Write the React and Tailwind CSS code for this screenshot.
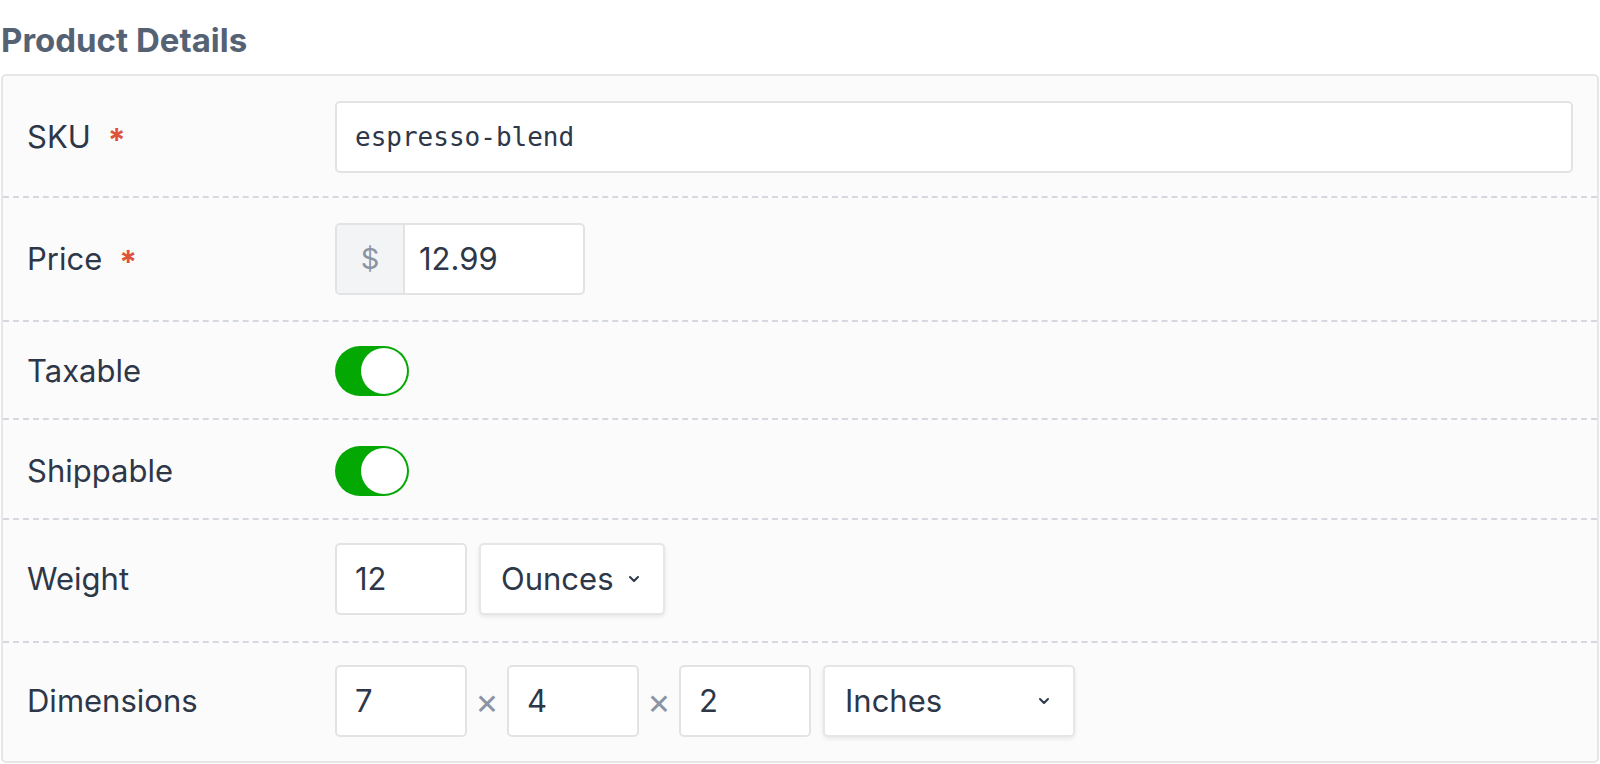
import React from 'react';

const font = { fontFamily: 'Inter, "Noto Sans", sans-serif' };

const Label = ({ children, required }) => (
  <div className="w-[308px] shrink-0 flex items-center text-[31px] text-[#2d3748]">
    <span>{children}</span>
    {required && <span className="ml-[17px] text-[32px] font-bold text-[#e0533a] leading-none pt-[8px]">*</span>}
  </div>
);

const Box = ({ className = '', children }) => (
  <div className={`h-[72px] bg-white border-2 border-[#e3e3e3] rounded-[5px] flex items-center text-[31px] text-[#2d3748] ${className}`}>
    {children}
  </div>
);

const Chevron = () => (
  <svg width="14" height="10" viewBox="0 0 14 10" fill="none" stroke="#2d3748" strokeWidth="2" strokeLinecap="round" strokeLinejoin="round">
    <polyline points="3,3 7,7 11,3" />
  </svg>
);

const Select = ({ value, width }) => (
  <div className={`h-[72px] ${width} bg-white border-2 border-[#e6e6e6] rounded-[5px] shadow-[0_2px_4px_rgba(0,0,0,0.08)] flex items-center justify-between pl-[20px] pr-[22px] text-[31px] text-[#2d3748]`}>
    <span>{value}</span>
    <Chevron />
  </div>
);

const Toggle = () => (
  <div className="w-[74px] h-[50px] rounded-full bg-[#03a803] p-[2px] flex justify-end">
    <div className="w-[46px] h-[46px] rounded-full bg-white" />
  </div>
);

const Times = () => (
  <span className="w-[40px] text-center text-[36px] leading-none text-[#8a94a3]">×</span>
);

const Row = ({ children, first, pad }) => (
  <div className={`flex items-center px-[24px] ${pad} ${first ? '' : 'border-t-2 border-dashed border-[#d5d9df]'}`}>
    {children}
  </div>
);

export default function App() {
  return (
    <div className="w-[1600px] h-[764px] bg-white px-[1px]" style={font}>
      <div className="h-[74px] flex items-center pt-[7px] text-[33px] font-bold text-[#556274]">
        Product Details
      </div>
      <div className="border-2 border-[#e6e6e6] rounded-[5px] bg-[#fbfbfb]">
        <Row first pad="pt-[25px] pb-[23px]">
          <Label required>SKU</Label>
          <Box className="flex-1 px-[18px]">
            <span className="text-[26px]" style={{ fontFamily: '"DejaVu Sans Mono", "Liberation Mono", monospace' }}>espresso-blend</span>
          </Box>
        </Row>
        <Row pad="pt-[25px] pb-[25px]">
          <Label required>Price</Label>
          <Box className="w-[250px] overflow-hidden">
            <div className="w-[68px] h-full bg-[#f3f4f6] border-r-2 border-[#e3e3e3] flex items-center justify-center text-[#8a94a3] text-[29px]">$</div>
            <span className="pl-[14px]">12.99</span>
          </Box>
        </Row>
        <Row pad="pt-[24px] pb-[22px]">
          <Label>Taxable</Label>
          <Toggle />
        </Row>
        <Row pad="pt-[26px] pb-[22px]">
          <Label>Shippable</Label>
          <Toggle />
        </Row>
        <Row pad="pt-[23px] pb-[26px]">
          <Label>Weight</Label>
          <div className="flex items-center gap-[12px]">
            <Box className="w-[132px] px-[18px]">12</Box>
            <Select value="Ounces" width="w-[186px]" />
          </div>
        </Row>
        <Row pad="pt-[22px] pb-[24px]">
          <Label>Dimensions</Label>
          <div className="flex items-center">
            <Box className="w-[132px] px-[18px]">7</Box>
            <Times />
            <Box className="w-[132px] px-[18px]">4</Box>
            <Times />
            <Box className="w-[132px] px-[18px]">2</Box>
            <div className="ml-[12px]">
              <Select value="Inches" width="w-[252px]" />
            </div>
          </div>
        </Row>
      </div>
    </div>
  );
}
